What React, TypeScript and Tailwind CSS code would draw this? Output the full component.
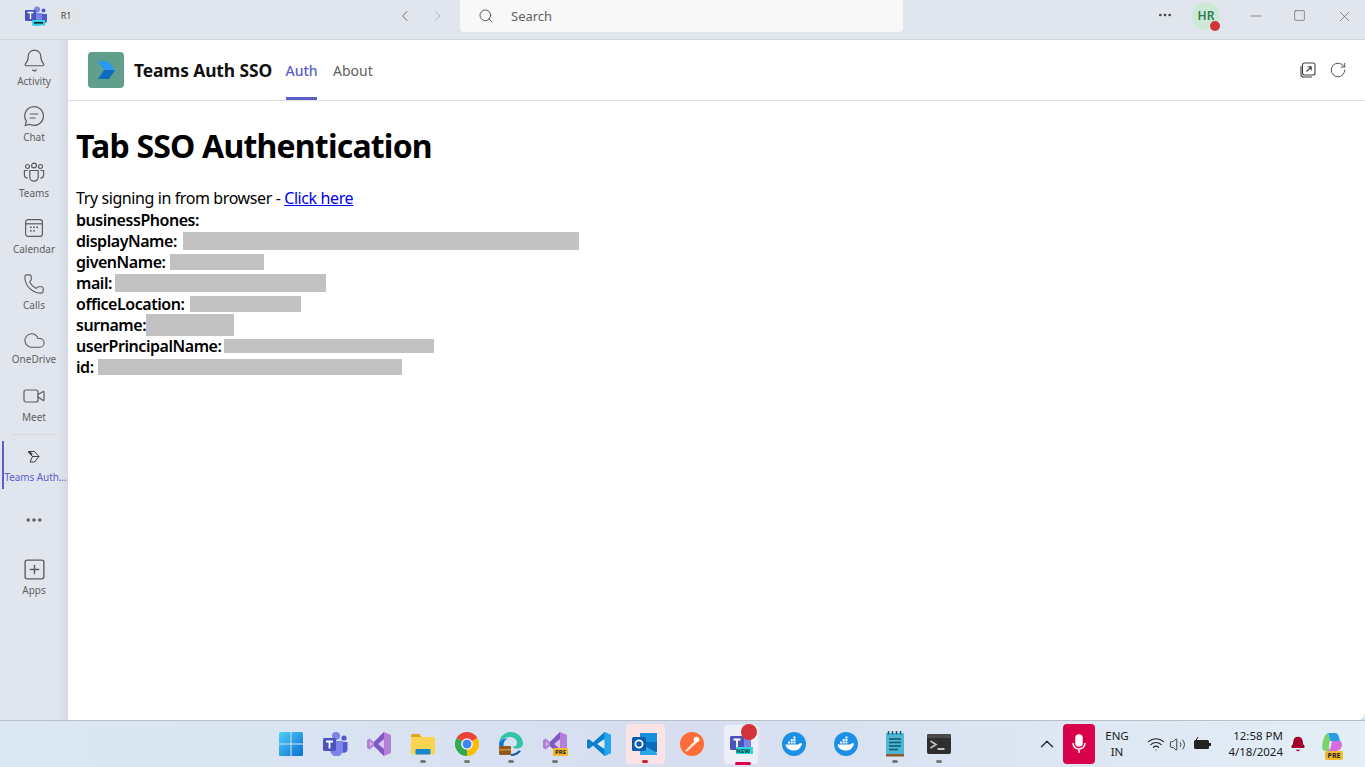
import { Bell, ChevronLeft, ChevronRight, ChevronUp, Cloud, Minus, MoreHorizontal, Phone, RotateCw, Search, Square, SquarePlus, Video, Volume2, Wifi, X } from "lucide-react";
import React from "react";

const font = "font-['Noto_Sans','Open_Sans',sans-serif]";

const ChatIcon = () => (
     <svg width="22" height="22" viewBox="0 0 22 22" fill="none" stroke="#5c5c5c" strokeWidth="1.2">
          <path d="M11 1.6a9.4 9.4 0 1 1-4.4 17.7l-4.4 1.2 1.2-4.2A9.4 9.4 0 0 1 11 1.6Z" />
          <path d="M7.2 9h7.6M7.2 13h5" strokeLinecap="round" />
     </svg>
);

const TeamsIcon = () => (
     <svg width="22" height="22" viewBox="0 0 22 22" fill="none" stroke="#5c5c5c" strokeWidth="1.2" className="mt-[2px]">
          <circle cx="4.5" cy="4.5" r="2" />
          <circle cx="11" cy="3.5" r="2.4" />
          <circle cx="17.5" cy="4.5" r="2" />
          <path d="M6.8 8.5h8.4v6.5a4.2 4.2 0 0 1-8.4 0Z" />
          <path d="M4.6 8.5H1.4v4.2c0 2 1.4 3.3 3.4 3.3M17.4 8.5h3.2v4.2c0 2-1.4 3.3-3.4 3.3" />
     </svg>
);

const CalendarIcon = () => (
     <svg width="20" height="20" viewBox="0 0 20 20" fill="none" stroke="#5c5c5c" strokeWidth="1.2">
          <rect x="1.6" y="1.6" width="16.8" height="16.8" rx="2.5" />
          <path d="M1.6 5.8h16.8" />
          <g fill="#5c5c5c" stroke="none">
               <rect x="6" y="8.5" width="1.6" height="1.6" />
               <rect x="9.2" y="8.5" width="1.6" height="1.6" />
               <rect x="12.4" y="8.5" width="1.6" height="1.6" />
               <rect x="6" y="12" width="1.6" height="1.6" />
               <rect x="9.2" y="12" width="1.6" height="1.6" />
          </g>
     </svg>
);

const AppGlyph = () => (
     <svg width="14" height="14" viewBox="0 0 14 14" fill="none" stroke="#424242" strokeWidth="1">
          <path d="M1.5 1.5h6l4.5 5-4.5 5.5H3l2.5-5.5Z" />
          <path d="M1.5 1.5 5.5 6.5h6.5" />
          <path d="M1.5 1.5 5 4.5" strokeWidth="2" />
     </svg>
);

const PopOutIcon = () => (
     <svg width="16" height="16" viewBox="0 0 16 16" fill="none" stroke="#424242" strokeWidth="1.1">
          <rect x="2.5" y="1" width="12.5" height="12" rx="2" />
          <path d="M1 4v8.500A2.500 2.500 0 0 0 3.500 15H12" />
          <path d="M6.500 9.500 11 5M7.500 4.800H11.200V8.500" />
     </svg>
);

type RailItem = { label: string; icon: React.ReactNode; labelGap: string };

const railItems: RailItem[] = [
     { label: "Activity", icon: <Bell size={25} strokeWidth={1.1} color="#5c5c5c" />, labelGap: "mt-[2px]" },
     { label: "Chat", icon: <ChatIcon />, labelGap: "mt-[2px]" },
     { label: "Teams", icon: <TeamsIcon />, labelGap: "mt-[2px]" },
     { label: "Calendar", icon: <CalendarIcon />, labelGap: "mt-[2px]" },
     { label: "Calls", icon: <Phone size={22} strokeWidth={1.2} color="#5c5c5c" />, labelGap: "mt-[2px]" },
     { label: "OneDrive", icon: <Cloud size={23} strokeWidth={1.1} color="#5c5c5c" />, labelGap: "mt-0" },
     { label: "Meet", icon: <Video size={24} strokeWidth={1.2} color="#5c5c5c" />, labelGap: "mt-[2px]" },
];

const Rail = () => (
     <aside className="w-[68px] shrink-0 flex flex-col items-stretch pt-1 bg-gradient-to-r from-[#e1e5ee] from-85% to-[#d5d9e0] rounded-bl-lg">
          {railItems.map((item) => (
               <div key={item.label} className="h-14 flex flex-col items-center">
                    <div className="h-6 mt-[4px] flex items-center justify-center">{item.icon}</div>
                    <span className={`${item.labelGap} text-[10px] leading-[14px] text-[#616161]`}>{item.label}</span>
               </div>
          ))}
          <div className="mx-3 -mt-[2px] h-px bg-[#d8d8d8]" />
          <div className="relative mt-[6px] h-12 flex flex-col items-center">
               <div className="absolute left-[2px] top-0 h-12 w-[2px] bg-[#5b5fc7]" />
               <div className="h-4 mt-2 flex items-center"><AppGlyph /></div>
               <span className="mt-[5px] pl-[3px] text-[10px] leading-[14px] tracking-[-0.1px] text-[#5b5fc7] whitespace-nowrap">Teams Auth...</span>
          </div>
          <div className="mt-[23px] h-4 flex justify-center items-center">
               <MoreHorizontal size={20} strokeWidth={2.2} color="#616161" />
          </div>
          <div className="mt-[29px] flex flex-col items-center">
               <SquarePlus size={25} strokeWidth={1.3} color="#5c5c5c" />
               <span className="mt-[1px] text-[10px] leading-[14px] text-[#616161]">Apps</span>
          </div>
     </aside>
);

const SmallTeamsLogo = () => (
     <svg width="24" height="20" viewBox="0 0 24 20">
          <circle cx="13" cy="3.5" r="3" fill="#7b83eb" />
          <circle cx="19.5" cy="4.5" r="2" fill="#5059c9" />
          <path d="M16 8h7v6a3.5 3.5 0 0 1-7 0Z" fill="#5059c9" />
          <path d="M8 7h10v8a5 5 0 0 1-10 0Z" fill="#7b83eb" />
          <rect x="1" y="4" width="11" height="11" rx="1" fill="#4b53bc" />
          <path d="M3.5 6.5h6M6.5 6.5v6.5" stroke="#fff" strokeWidth="1.4" />
          <rect x="8" y="14" width="13" height="5.5" fill="#2fd6dc" />
          <rect x="10" y="16" width="9" height="1.6" fill="#123" />
     </svg>
);

const TitleBar = () => (
     <header className="h-10 shrink-0 flex items-start bg-[#e1e5ee] border-b border-[#d2d6dd]">
          <div className="ml-6 mt-[6px] w-6 flex"><SmallTeamsLogo /></div>
          <div className="ml-1 mt-2 w-7 h-4 rounded-sm bg-[#e3e4e8] flex items-center justify-center text-[9px] text-[#424242]">R1</div>
          <div className="ml-[316px] mt-[7px] flex items-center gap-[15px] w-[50px]">
               <ChevronLeft size={18} strokeWidth={1.3} color="#616161" />
               <ChevronRight size={18} strokeWidth={1.3} color="#b4b8bf" />
          </div>
          <div className="ml-[14px] w-[443px] h-8 rounded-b bg-[#f8f8f9] flex items-center pl-[18px] gap-[17px] text-[13px] text-[#616161]">
               <Search size={16} strokeWidth={1.3} color="#424242" />
               <span className="pt-px">Search</span>
          </div>
          <div className="ml-[254px] mt-[7px] w-[16px] flex"><MoreHorizontal size={16} strokeWidth={2} color="#424242" /></div>
          <div className="relative ml-[19px] mt-[2px] w-7 h-7 rounded-full bg-[#cde9d6] flex items-center justify-center text-xs font-semibold text-[#2f7a50]">
               HR
               <span className="absolute right-0 bottom-[-1px] w-[10px] h-[10px] rounded-full bg-[#d13438]" />
          </div>
          <div className="ml-[28px] mt-[8px] flex"><Minus size={16} strokeWidth={1} color="#5c5c5c" /></div>
          <div className="ml-[29px] mt-[9px] flex"><Square size={13} strokeWidth={1.2} color="#5c5c5c" /></div>
          <div className="ml-[30px] mt-[8px] flex"><X size={17} strokeWidth={1} color="#5c5c5c" /></div>
     </header>
);

const AppLogo = () => (
     <div className="w-9 h-9 rounded bg-[#5f9f8b] flex items-center justify-center">
          <svg width="20" height="20" viewBox="0 0 20 20">
               <path d="M1 1h11l7 9H8Z" fill="#2b9af3" />
               <path d="M8 10h11l-6 9H2Z" fill="#0f6cbd" />
          </svg>
     </div>
);

const AppHeader = () => (
     <div className="h-[61px] shrink-0 flex items-center border-b border-[#e0e0e0] pl-5 pr-[18px]">
          <AppLogo />
          <span className="ml-[10px] text-[17.4px] font-bold text-[#111] tracking-[-0.1px]">Teams Auth SSO</span>
          <div className="relative ml-[14px] self-stretch flex items-center pt-[2px] text-sm font-medium text-[#5b5fc7] w-[31px] justify-center">
               Auth
               <span className="absolute bottom-0 left-0 right-0 h-[3px] bg-[#5b5fc7]" />
          </div>
          <span className="ml-4 pt-[2px] text-sm text-[#616161]">About</span>
          <div className="ml-auto flex items-center gap-[13px]">
               <PopOutIcon />
               <RotateCw size={18} strokeWidth={1.2} color="#424242" />
          </div>
     </div>
);

type Field = { label: string; block?: string };

const fields: Field[] = [
     { label: "businessPhones:" },
     { label: "displayName:", block: "ml-[6px] w-[396px] h-[18px]" },
     { label: "givenName:", block: "ml-[4px] w-[94px] h-4" },
     { label: "mail:", block: "ml-[3px] w-[211px] h-[18px]" },
     { label: "officeLocation:", block: "ml-[6px] w-[111px] h-4" },
     { label: "surname:", block: "w-[88px] h-[22px]" },
     { label: "userPrincipalName:", block: "ml-[3px] w-[210px] h-[14px]" },
     { label: "id:", block: "ml-[4px] w-[304px] h-4" },
];

const Content = () => (
     <div className="flex-1 pl-2 text-black">
          <h1 className="mt-[21px] text-[32px] leading-[48px] font-bold tracking-[-0.8px]">Tab SSO Authentication</h1>
          <p className="mt-[18px] text-base leading-[21px] tracking-[-0.4px]">
               Try signing in from browser - <a className="text-[#0000ee] underline">Click here</a>
          </p>
          {fields.map((field) => (
               <div key={field.label} className="h-[21px] flex items-center text-base font-semibold tracking-[-0.45px]">
                    <span>{field.label}</span>
                    {field.block && <span className={`bg-[#c2c2c2] ${field.block}`} />}
               </div>
          ))}
     </div>
);

const WindowsLogo = () => (
     <svg width="24" height="24" viewBox="0 0 24 24">
          <defs>
               <linearGradient id="win" x1="0" y1="0" x2="1" y2="1">
                    <stop offset="0" stopColor="#4fd0f8" />
                    <stop offset="1" stopColor="#0a6fd0" />
               </linearGradient>
          </defs>
          <path d="M0 1.5A1.5 1.5 0 0 1 1.5 0h10v11.500H0ZM12.500 0h10A1.500 1.500 0 0 1 24 1.500v10H12.500ZM0 12.500h11.500V24h-10A1.500 1.500 0 0 1 0 22.500ZM12.500 12.500H24v10a1.500 1.500 0 0 1-1.500 1.500h-10Z" fill="url(#win)" />
     </svg>
);

const TeamsTask = () => (
     <svg width="26" height="24" viewBox="0 0 26 24">
          <circle cx="14" cy="4" r="4" fill="#7b83eb" />
          <circle cx="22" cy="6" r="2.6" fill="#5059c9" />
          <path d="M18 10h7.500v7a3.700 3.700 0 0 1-7.500 0Z" fill="#5059c9" />
          <path d="M8 9h13v9a6.500 6.500 0 0 1-13 0Z" fill="#7b83eb" />
          <rect x="1" y="6" width="13" height="13" rx="1.500" fill="#4b53bc" />
          <path d="M4 9.500h7M7.500 9.500v7" stroke="#fff" strokeWidth="1.800" />
     </svg>
);

const VisualStudio = ({ pre }: { pre?: boolean }) => (
     <div className="relative w-6 h-6">
          <svg width="24" height="24" viewBox="0 0 24 24">
               <path d="M17 0 24 3v18l-7 3L7 14 2.500 17.500 0 16V8l2.500-1.500L7 10Z" fill="#b180d7" />
               <path d="M17 0v24L7 14V10Z" fill="#7e57c2" />
               <path d="M17 7v10l-6-5Z" fill="#d9c2f0" />
               <path d="M3 9.500v5L5.500 12Z" fill="#d9c2f0" />
          </svg>
          {pre && <span className="absolute -right-[1px] bottom-0 h-[8px] w-[15px] rounded-[1px] bg-[#f2b92e] text-[6px] leading-[8px] font-bold text-center text-[#222]">PRE</span>}
     </div>
);

const Folder = () => (
     <svg width="24" height="24" viewBox="0 0 24 24">
          <path d="M0 3.500A1.500 1.500 0 0 1 1.500 2h7l2 3H0Z" fill="#e2a516" />
          <path d="M0 5h24v16a1.500 1.500 0 0 1-1.500 1.500h-21A1.500 1.500 0 0 1 0 21Z" fill="#fbd54f" />
          <rect x="4.500" y="17" width="15" height="5.500" rx="1" fill="#1788cf" />
     </svg>
);

const Chrome = () => (
     <svg width="24" height="24" viewBox="0 0 24 24">
          <path d="M12 12 1.600 6A12 12 0 0 1 22.400 6Z" fill="#ea4335" />
          <path d="M12 12 22.400 6A12 12 0 0 1 12 24Z" fill="#fbbc04" />
          <path d="M12 12v12A12 12 0 0 1 1.600 6Z" fill="#34a853" />
          <circle cx="12" cy="12" r="5.800" fill="#fff" />
          <circle cx="12" cy="12" r="4.500" fill="#4285f4" />
     </svg>
);

const Edge = () => (
     <svg width="24" height="24" viewBox="0 0 24 24">
          <path d="M12 0a12 12 0 0 1 12 11c0 4-3 5.500-6 5.500-2 0-4-.5-4-2 3 0 4-1.500 4-3.500C18 7 14 4.500 10 5 5 5.500 1.500 8.500 0 11 .5 5 5.500 0 12 0Z" fill="#2fc6a7" />
          <path d="M0 11c2-4 6-5 9-4.500C6 7.500 4.500 10 4.500 13c0 4 3 8 8 9-6 2-12.500-3-12.500-11Z" fill="#0f78d4" />
          <path d="M12 22c3 0 6-1.500 7.500-3.500L22 19c-2 3-6 5-10 5Z" fill="#0a5aa8" />
          <rect x="0" y="14" width="12" height="9" rx="1" fill="#8f5a1d" />
          <rect x="0" y="17" width="12" height="1.500" fill="#d38f35" />
     </svg>
);

const VsCode = () => (
     <svg width="24" height="24" viewBox="0 0 24 24">
          <path d="M17.500 0 24 3v18l-6.500 3L6 13.500 1.800 17 0 15.800V8.200L1.800 7 6 10.500Z" fill="#0a7fd1" />
          <path d="M17.500 0 24 3v18l-6.500 3Z" fill="#27a4ee" />
          <path d="M17.500 7 10 12l7.500 5Z" fill="#e2ecf7" />
     </svg>
);

const Outlook = () => (
     <svg width="26" height="24" viewBox="0 0 26 24">
          <rect x="8" y="1" width="17" height="9" fill="#1490df" />
          <rect x="8" y="10" width="17" height="10" fill="#0f6cbd" />
          <path d="M8 11 25 21v2H8Z" fill="#28a8ea" />
          <rect x="0" y="5" width="14" height="14" rx="1.500" fill="#0a5cb0" />
          <circle cx="7" cy="12" r="3.600" fill="none" stroke="#fff" strokeWidth="1.800" />
     </svg>
);

const Postman = () => (
     <svg width="24" height="24" viewBox="0 0 24 24">
          <circle cx="12" cy="12" r="12" fill="#ff6c37" />
          <path d="M5 19 15 8.500l2 2L7 19.500Z" fill="#fff" opacity="0.85" />
          <circle cx="16.500" cy="7.500" r="2.800" fill="#fff" />
     </svg>
);

const TeamsNew = () => (
     <div className="relative w-[34px] h-[39px] rounded bg-[#eceef8] shadow-[2px_0_0_#dfe3ee] flex justify-center pt-2">
          <svg width="24" height="22" viewBox="0 0 24 22">
               <path d="M8 4h14v9a7 7 0 0 1-14 0Z" fill="#7b83eb" />
               <rect x="1" y="3" width="14" height="14" rx="1.500" fill="#4b53bc" />
               <path d="M4.500 6.500h7M8 6.500v8" stroke="#fff" strokeWidth="1.800" />
               <rect x="7" y="14" width="17" height="7" fill="#2fd6dc" />
          </svg>
          <span className="absolute left-[12px] top-[22px] text-[6px] leading-[8px] font-bold text-[#0c3b3f]">NEW</span>
          <span className="absolute right-[1px] -top-[1px] w-4 h-4 rounded-full bg-[#d13438]" />
          <span className="absolute left-[11px] bottom-[-1px] w-4 h-[3px] rounded bg-[#e3004f]" />
     </div>
);

const Docker = () => (
     <svg width="24" height="24" viewBox="0 0 24 24">
          <circle cx="12" cy="12" r="12" fill="#1d8fe6" />
          <path d="M3.500 12.500h13c.6-1 2-1.500 3.500-1 .3 1-.2 1.700-.8 2-.8 3-3.500 5-7.200 5-5 0-8-2.500-8.500-6Z" fill="#fff" />
          <path d="M6 9.500h2v2H6ZM8.700 9.500h2v2h-2ZM11.400 9.500h2v2h-2ZM8.700 7h2v2h-2ZM11.400 7h2v2h-2ZM11.400 4.500h2v2h-2Z" fill="#fff" />
     </svg>
);

const Notepad = () => (
     <svg width="20" height="26" viewBox="0 0 20 26">
          <rect x="1" y="2" width="18" height="21" rx="1" fill="#4cb7d2" />
          <rect x="1" y="23" width="18" height="2.500" fill="#8c5a2b" />
          <path d="M4 8h12M4 11.500h12M4 15h12M4 18.500h9" stroke="#10566f" strokeWidth="1.500" />
          <path d="M3.500 0v3.500M7.500 0v3.500M11.500 0v3.500M15.500 0v3.500" stroke="#10566f" strokeWidth="1.500" />
     </svg>
);

const Terminal = () => (
     <svg width="24" height="20" viewBox="0 0 24 20">
          <rect width="24" height="20" rx="2" fill="#2e2e2e" />
          <rect width="24" height="4" rx="1.500" fill="#4a4a4a" />
          <path d="M3.500 7 9 10.500 3.500 14" stroke="#bdbdbd" strokeWidth="1.800" fill="none" />
          <path d="M10.500 15h7" stroke="#e8e8e8" strokeWidth="1.600" />
     </svg>
);

const Copilot = () => (
     <div className="relative w-[24px] h-6">
          <svg width="24" height="22" viewBox="0 0 24 22">
               <path d="M8 1h7c2 0 3 1 4 4l1 4H10Z" fill="#2a9ce6" />
               <path d="M8 1C5 2 4 5 3 9c-1 5-2 10 3 10h4c-2-3-1-6 0-10Z" fill="#7dd36a" />
               <path d="M12 9h8c3 1 3 10-4 10H8c3-1 3-6 4-10Z" fill="#d76be0" />
          </svg>
          <span className="absolute left-[5px] bottom-[-4px] h-[9px] w-[18px] rounded-[2px] bg-[#f2b92e] text-[7px] leading-[9px] font-bold text-center text-[#222]">PRE</span>
     </div>
);

type TaskItem = { width: string; icon: React.ReactNode; dot?: string };

const taskItems: TaskItem[] = [
     { width: "w-11", icon: <WindowsLogo /> },
     { width: "w-11", icon: <TeamsTask /> },
     { width: "w-11", icon: <VisualStudio /> },
     { width: "w-11", icon: <Folder />, dot: "bg-[#7a7a7a]" },
     { width: "w-11", icon: <Chrome />, dot: "bg-[#7a7a7a]" },
     { width: "w-11", icon: <Edge />, dot: "bg-[#7a7a7a]" },
     { width: "w-11", icon: <VisualStudio pre />, dot: "bg-[#7a7a7a]" },
     { width: "w-11", icon: <VsCode /> },
     { width: "w-12", icon: <div className="w-[39px] h-[40px] rounded bg-[#fce4e6] flex items-center justify-center"><Outlook /></div>, dot: "bg-[#c4262e]" },
     { width: "w-[46px]", icon: <Postman /> },
     { width: "w-[52px]", icon: <TeamsNew /> },
     { width: "w-[54px]", icon: <Docker /> },
     { width: "w-[50px]", icon: <Docker /> },
     { width: "w-12", icon: <Notepad />, dot: "bg-[#7a7a7a]" },
     { width: "w-10", icon: <Terminal />, dot: "bg-[#7a7a7a]" },
];

const Taskbar = () => (
     <footer className="h-[47px] shrink-0 flex items-center border-t border-[#b9bec7] bg-gradient-to-r from-[#dbe8f3] via-[#d6def0] to-[#e3eef6] text-[#1a1a1a]">
          <div className="ml-[269px] flex h-full items-center">
               {taskItems.map((item, index) => (
                    <div key={index} className={`relative h-full flex items-center justify-center ${item.width}`}>
                         {item.icon}
                         {item.dot && <span className={`absolute bottom-[4px] left-1/2 -translate-x-1/2 w-[6px] h-[3px] rounded ${item.dot}`} />}
                    </div>
               ))}
          </div>
          <div className="ml-[77px] flex"><ChevronUp size={22} strokeWidth={1.3} color="#222" /></div>
          <div className="ml-[5px] w-8 h-10 rounded-sm bg-[#d9004c] flex items-center justify-center">
               <svg width="16" height="22" viewBox="0 0 16 22" fill="none" stroke="#fff" strokeWidth="1.500">
                    <rect x="5" y="2" width="6" height="11" rx="3" fill="#fff" />
                    <path d="M2 10a6 6 0 0 0 12 0M8 16v4" />
               </svg>
          </div>
          <div className="w-11 text-center text-[11.500px] leading-[16px]">ENG<br />IN</div>
          <div className="ml-[8px] flex items-center gap-[4px]">
               <Wifi size={18} strokeWidth={1.6} color="#222" />
               <Volume2 size={17} strokeWidth={1.2} color="#222" />
               <svg width="20" height="14" viewBox="0 0 20 14" className="ml-[2px]">
                    <rect x="2" y="3" width="15" height="9" rx="1.500" fill="#222" />
                    <rect x="17" y="6" width="2" height="3" fill="#222" />
                    <path d="M6 0 3 5h3L4 9" stroke="#222" fill="none" />
               </svg>
          </div>
          <div className="ml-[9px] w-[62px] text-right text-[11.500px] leading-[16px] whitespace-nowrap">12:58 PM<br />4/18/2024</div>
          <div className="ml-[7px] flex"><Bell size={16} fill="#a4002c" color="#a4002c" /></div>
          <div className="ml-[14px] flex"><Copilot /></div>
     </footer>
);

export default function App() {
     return (
          <div className={`w-[1365px] h-[767px] flex flex-col overflow-hidden bg-[#dbe4f1] ${font}`}>
               <TitleBar />
               <div className="h-[680px] flex">
                    <Rail />
                    <main className="flex-1 flex flex-col bg-white rounded-br-lg">
                         <AppHeader />
                         <Content />
                    </main>
               </div>
               <Taskbar />
          </div>
     );
}
